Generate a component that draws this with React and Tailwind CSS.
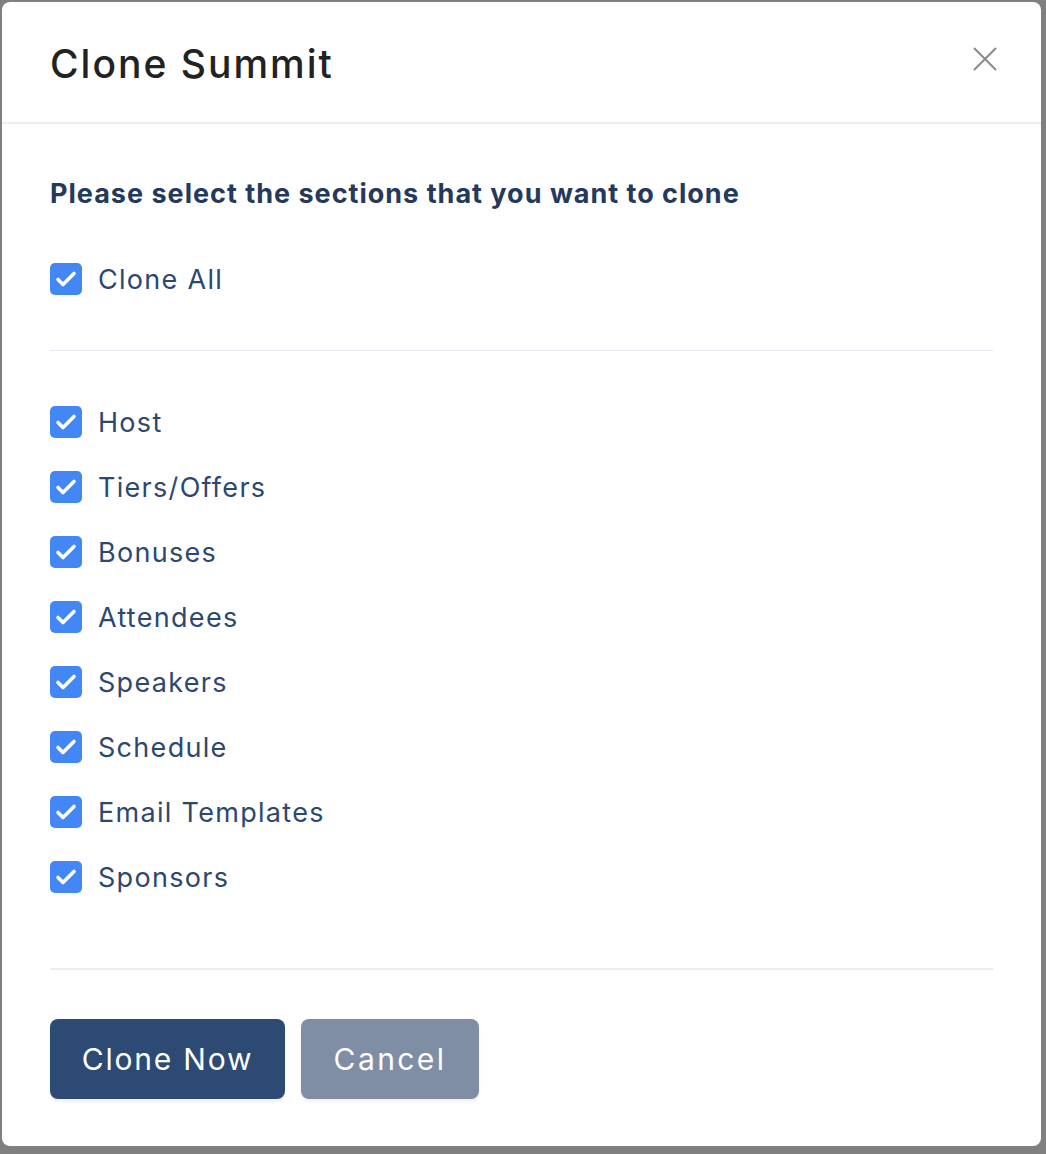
import { useState } from 'react'

const SECTIONS = ['Host', 'Tiers/Offers', 'Bonuses', 'Attendees', 'Speakers', 'Schedule', 'Email Templates', 'Sponsors']

function Check({ checked, onChange, label }) {
  return (
    <label className="flex items-center h-[32px] cursor-pointer select-none">
      <span
        onClick={onChange}
        className={`w-[32px] h-[32px] rounded-[5px] flex items-center justify-center ${checked ? 'bg-[#4287f5]' : 'bg-white border-2 border-[#cbd5e1]'}`}
      >
        {checked && (
          <svg width="32" height="32" viewBox="0 0 32 32" fill="none">
            <path d="M8 16.5l5 5 11-11" stroke="#fff" strokeWidth="3.6" strokeLinecap="round" strokeLinejoin="round" />
          </svg>
        )}
      </span>
      <span className="ml-[16px] text-[27px] tracking-[1.3px] text-[#2c4870] leading-none">{label}</span>
    </label>
  )
}

export default function App() {
  const [checked, setChecked] = useState(() => Object.fromEntries(SECTIONS.map(s => [s, true])))
  const all = SECTIONS.every(s => checked[s])

  const toggleAll = () => setChecked(Object.fromEntries(SECTIONS.map(s => [s, !all])))
  const toggle = s => setChecked(prev => ({ ...prev, [s]: !prev[s] }))

  return (
    <div className="w-[1046px] h-[1154px] bg-[#808080] pt-[2px] pl-[2px] font-['Inter',sans-serif]">
      <div className="w-[1039px] h-[1144px] bg-white rounded-[8px] flex flex-col">
        {/* header */}
        <div className="h-[122px] px-[48px] flex items-center justify-between border-b-2 border-[#ededf0]">
          <h1 className="text-[39px] font-medium text-[#222] tracking-[2px] mt-[4px]">Clone Summit</h1>
          <button className="mr-[-4px] mt-[-6px] text-[#8a8a8a]">
            <svg width="24" height="24" viewBox="0 0 24 24" fill="none">
              <path d="M1 1l22 22M23 1L1 23" stroke="currentColor" strokeWidth="2" />
            </svg>
          </button>
        </div>

        {/* body */}
        <div className="px-[48px] pt-[50px]">
          <p className="h-[40px] flex items-center text-[27px] font-bold tracking-[1px] text-[#24395b]">
            Please select the sections that you want to clone
          </p>
          <div className="mt-[49px]">
            <Check checked={all} onChange={toggleAll} label="Clone All" />
          </div>
          <div className="mt-[55px] h-px bg-[#e4e9f2]" />
          <div className="mt-[55px] flex flex-col gap-[33px]">
            {SECTIONS.map(s => (
              <Check key={s} checked={checked[s]} onChange={() => toggle(s)} label={s} />
            ))}
          </div>
          <div className="mt-[75px] h-[2px] bg-[#e9eef6]" />
          <div className="mt-[49px] flex gap-[16px]">
            <button className="h-[80px] w-[235px] rounded-[8px] bg-[#2c4a74] text-white text-[30px] tracking-[1.8px] shadow-[0_3px_3px_rgba(0,0,0,0.06)]">
              Clone Now
            </button>
            <button className="h-[80px] w-[178px] rounded-[8px] bg-[#808ea5] text-white text-[30px] tracking-[2.4px] shadow-[0_3px_3px_rgba(0,0,0,0.06)]">
              Cancel
            </button>
          </div>
        </div>
      </div>
    </div>
  )
}
